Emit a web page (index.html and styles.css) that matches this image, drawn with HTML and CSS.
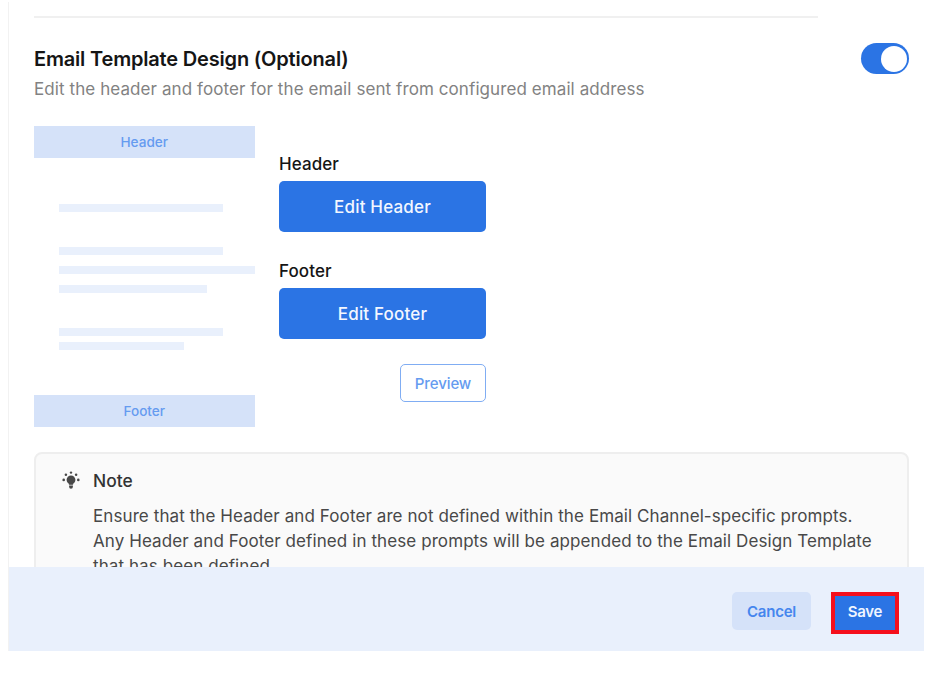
FILE: index.html
```html
<!DOCTYPE html>
<html lang="en">
<head>
<meta charset="utf-8">
<title>Email Template Design</title>
<link rel="stylesheet" href="styles.css">
</head>
<body>
<main class="panel">
  <div class="content">
    <hr class="divider">
    <header class="heading">
      <div>
        <h1 class="title">Email Template Design (Optional)</h1>
        <p class="subtitle">Edit the header and footer for the email sent from configured email address</p>
      </div>
      <button class="toggle" role="switch" aria-checked="true"><span class="knob"></span></button>
    </header>
    <section class="design">
      <div class="mock">
        <div class="band">Header</div>
        <div class="lines">
          <i class="line medium"></i>
          <i class="line medium gap-large"></i>
          <i class="line full gap-small"></i>
          <i class="line short gap-small"></i>
          <i class="line medium gap-large"></i>
          <i class="line shorter gap-tiny"></i>
        </div>
        <div class="band">Footer</div>
      </div>
      <div class="actions">
        <h2 class="label">Header</h2>
        <button class="edit">Edit Header</button>
        <h2 class="label second">Footer</h2>
        <button class="edit">Edit Footer</button>
        <button class="preview">Preview</button>
      </div>
    </section>
    <section class="note">
      <svg class="bulb" viewBox="0 0 18 18" width="18" height="18" fill="#484848">
        <circle cx="9" cy="8.8" r="4.4"/>
        <path d="M6.9 11h4.2v2.7H6.9zM7.1 14.4h3.8v1.4a1.9 1.9 0 0 1-3.8 0z"/>
        <circle cx="9" cy="1.6" r="1.2"/>
        <circle cx="3.9" cy="3.7" r="1.25"/>
        <circle cx="14.1" cy="3.7" r="1.25"/>
        <circle cx="1.7" cy="8.9" r="1.3"/>
        <circle cx="16.3" cy="8.9" r="1.3"/>
      </svg>
      <div>
        <h2 class="note-title">Note</h2>
        <p class="note-text">Ensure that the Header and Footer are not defined within the Email Channel-specific prompts.<br>Any Header and Footer defined in these prompts will be appended to the Email Design Template<br>that has been defined.</p>
      </div>
    </section>
  </div>
  <footer class="bar">
    <button class="cancel">Cancel</button>
    <button class="save">Save</button>
  </footer>
</main>
</body>
</html>
```
FILE: styles.css
```css
* { box-sizing: border-box; }
body { margin: 0; background: #fff; font-family: Inter, "Liberation Sans", sans-serif; color: #151515; }
h1, h2, p { margin: 0; white-space: nowrap; }
button { font: inherit; border: 0; padding: 0; display: flex; align-items: center; justify-content: center; }
.panel { margin: 2px 8px 0; width: 916px; height: 649px; border-left: 1px solid #f2f2f2; display: flex; flex-direction: column; }
.content { height: 565px; padding: 14px 15px 0 25px; overflow: hidden; flex: none; }
.divider { margin: 0; border: 0; height: 2px; width: 784px; background: #f0f0f0; }
.heading { display: flex; justify-content: space-between; padding-top: 25px; height: 108px; }
.title { font-size: 20px; line-height: 32px; font-weight: 600; letter-spacing: -0.18px; }
.subtitle { font-size: 17px; line-height: 28px; color: #828282; letter-spacing: 0.086px; }
.toggle { width: 48px; height: 31px; border-radius: 16px; background: #2b74e4; justify-content: flex-end; padding-right: 2px; }
.knob { width: 26px; height: 26px; border-radius: 50%; background: #fff; }
.design { display: flex; gap: 24.5px; height: 326px; }
.mock { width: 220.5px; height: 301px; display: flex; flex-direction: column; }
.band { height: 32px; flex: none; background: #d5e2f9; color: #659bf0; font-size: 13.6px; font-weight: 500; display: flex; align-items: center; justify-content: center; }
.lines { flex: 1; padding: 46px 0 0 24.5px; display: flex; flex-direction: column; }
.line { height: 8px; background: #e9f0fc; }
.medium { width: 164px; }
.full { width: 196px; }
.short { width: 148px; }
.shorter { width: 125px; }
.gap-large { margin-top: 35px; }
.gap-small { margin-top: 11px; }
.gap-tiny { margin-top: 6px; }
.actions { width: 207px; padding-top: 26px; display: flex; flex-direction: column; }
.label { font-size: 17px; font-weight: 500; line-height: 24px; margin-bottom: 5px; letter-spacing: 0.08px; }
.second { margin-top: 27px; }
.edit { height: 51px; border-radius: 5px; background: #2b74e4; color: #f3f7ff; font-size: 17px; font-weight: 500; letter-spacing: 0.18px; }
.preview { align-self: flex-end; width: 86px; height: 38px; margin-top: 25px; border: 1.5px solid #80adf3; border-radius: 5px; background: #fff; color: #659bf0; font-size: 15px; font-weight: 500; letter-spacing: -0.1px; }
.note { width: 875px; height: 150px; border: 2px solid #eee; border-radius: 8px; background: #fafafa; padding: 15px 0 0 26px; display: flex; gap: 13px; color: #484848; }
.bulb { flex: none; margin-top: 2px; }
.note-title { font-size: 17.4px; font-weight: 500; line-height: 24px; color: #333; }
.note-text { font-size: 17px; line-height: 25px; margin-top: 11px; letter-spacing: 0.09px; }
.bar { height: 84px; flex: none; background: #e9f0fc; display: flex; justify-content: flex-end; align-items: flex-start; padding: 25px 25px 0 0; gap: 20px; }
.cancel { width: 79px; height: 38px; border-radius: 5px; background: #d5e2f9; color: #4586ee; font-size: 15px; font-weight: 600; letter-spacing: -0.25px; }
.save { width: 68px; height: 42px; border: 4px solid #f50f1c; background: #2b74e4; color: #f0f5ff; font-size: 15px; font-weight: 600; letter-spacing: -0.3px; padding-bottom: 4px; }
```
